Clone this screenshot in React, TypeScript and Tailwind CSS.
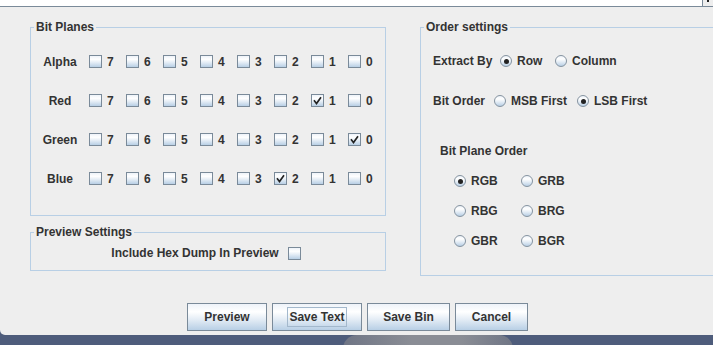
import React from 'react';

const grad = 'bg-[linear-gradient(180deg,#eef3f9_0%,#ffffff_30%,#e3ecf5_60%,#b8cfe5_100%)]';

function CheckBox({ checked }: { checked?: boolean }) {
  return (
    <span className={`w-[13px] h-[13px] box-border border border-[#7a8a99] ${grad} flex items-center justify-center shrink-0`}>
      {checked && (
        <svg width="11" height="11" viewBox="0 0 11 11">
          <polyline points="2.5,6 4.5,8.5 8.5,3" fill="none" stroke="#222" strokeWidth="1.7" strokeLinecap="square" />
        </svg>
      )}
    </span>
  );
}

function Radio({ on, label, w }: { on?: boolean; label: string; w: string }) {
  return (
    <span className={`flex items-center gap-[5px] ${w}`}>
      <span className={`w-[12px] h-[12px] box-border rounded-full border border-[#8593a0] ${grad} flex items-center justify-center shrink-0`}>
        {on && <span className="w-[5px] h-[5px] rounded-full bg-[#222]" />}
      </span>
      <span>{label}</span>
    </span>
  );
}

// canal -> bit coché
const planes: [string, number | null][] = [
  ['Alpha', null],
  ['Red', 1],
  ['Green', 0],
  ['Blue', 2],
];

export default function App() {
  return (
    <div className="w-[713px] h-[345px] overflow-hidden bg-[#4e5c7b] font-['Liberation_Sans',Arial,sans-serif] font-bold text-[12px] leading-[14px] text-[#333]">
      {/* bande du haut */}
      <div className="flex h-[7px] border-b border-[#7a8a99] bg-[#eeeeee]">
        <div className="w-[702px] bg-white" />
        <div className="w-px bg-[#7a8a99]" />
        <div className="flex-1 pl-[4px]">
          <div className="w-[2px] h-[2px] bg-[#222]" />
        </div>
      </div>

      {/* fenêtre */}
      <div className="h-[328px] bg-[#eeeeee] rounded-bl-[5px] flex flex-col pt-[13px]">
        <div className="flex">
          <div className="ml-[30px] w-[356px] flex flex-col">
            <fieldset className="h-[196px] border border-[#b8cfe5]">
              <legend className="ml-[3px] px-[2px]">Bit Planes</legend>
              <div className="pt-[8px] flex flex-col">
                {planes.map(([name, bit]) => (
                  <div key={name} className="h-[39px] flex items-center">
                    <span className="w-[58px] text-center">{name}</span>
                    {[7, 6, 5, 4, 3, 2, 1, 0].map((b) => (
                      <span key={b} className="w-[37px] flex items-center gap-[5px]">
                        <CheckBox checked={bit === b} />
                        <span>{b}</span>
                      </span>
                    ))}
                  </div>
                ))}
              </div>
            </fieldset>

            <fieldset className="mt-[9px] h-[46px] border border-[#b8cfe5]">
              <legend className="ml-[3px] px-[2px]">Preview Settings</legend>
              <div className="h-[28px] flex items-center justify-center gap-[9px] pr-[4px]">
                <span>Include Hex Dump In Preview</span>
                <CheckBox />
              </div>
            </fieldset>
          </div>

          <fieldset className="ml-[34px] w-[320px] h-[256px] shrink-0 border border-[#b8cfe5]">
            <legend className="ml-[3px] px-[2px]">Order settings</legend>
            <div className="pl-[12px] pt-[17px] flex flex-col">
              <div className="h-[20px] flex items-center">
                <span className="w-[67px]">Extract By</span>
                <Radio on label="Row" w="w-[55px]" />
                <Radio label="Column" w="w-[70px]" />
              </div>
              <div className="mt-[20px] h-[20px] flex items-center">
                <span className="w-[61px]">Bit Order</span>
                <Radio label="MSB First" w="w-[83px]" />
                <Radio on label="LSB First" w="w-[80px]" />
              </div>
              <div className="mt-[30px] ml-[7px] h-[20px] flex items-center">Bit Plane Order</div>
              <div className="mt-[5px] ml-[21px] grid grid-cols-[67px_67px]">
                {[
                  ['RGB', true],
                  ['GRB', false],
                  ['RBG', false],
                  ['BRG', false],
                  ['GBR', false],
                  ['BGR', false],
                ].map(([l, on]) => (
                  <div key={l as string} className="h-[30px] flex items-center">
                    <Radio on={on as boolean} label={l as string} w="w-[67px]" />
                  </div>
                ))}
              </div>
            </div>
          </fieldset>
        </div>

        {/* boutons */}
        <div className="mt-[27px] flex justify-center gap-[5px] pl-[2px]">
          {[
            ['Preview', 'w-[80px]'],
            ['Save Text', 'w-[90px]'],
            ['Save Bin', 'w-[83px]'],
            ['Cancel', 'w-[73px]'],
          ].map(([t, w]) => (
            <button
              key={t}
              className={`${w} h-[28px] box-border border border-[#7a8a99] ${grad} flex items-center justify-center font-bold text-[12px] text-[#333]`}
            >
              {t === 'Save Text' ? (
                <span className="h-[20px] px-[1px] flex items-center border border-[#a3b8cc]">{t}</span>
              ) : (
                t
              )}
            </button>
          ))}
        </div>
      </div>

      {/* bureau */}
      <div className="h-[10px] flex">
        <div className="ml-[343px] w-[170px] h-[14px] rounded-t-[60px] bg-[linear-gradient(90deg,#6f7585,#8a8d95_40%,#8a8d95_70%,#6f7585)]" />
      </div>
    </div>
  );
}
